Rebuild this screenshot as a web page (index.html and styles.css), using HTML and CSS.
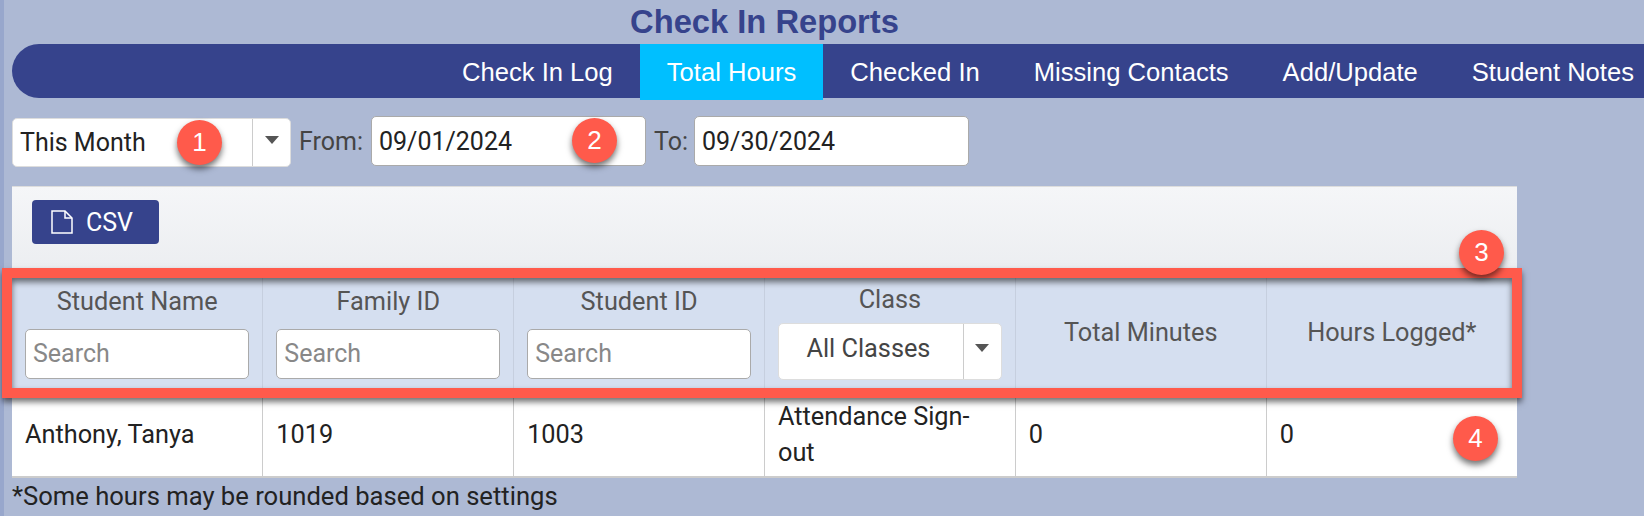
FILE: index.html
```html
<!DOCTYPE html>
<html lang="en">
<head>
    <meta charset="UTF-8">
    <title>Check In Reports</title>
    <link rel="stylesheet" href="styles.css">
</head>
<body>
    <div class="title-wrap">
        <h1>Check In Reports</h1>
    </div>

    <div class="nav">
        <a href="#">Check In Log</a>
        <a href="#" class="active">Total Hours</a>
        <a href="#">Checked In</a>
        <a href="#">Missing Contacts</a>
        <a href="#">Add/Update</a>
        <a href="#" class="last">Student Notes</a>
    </div>

    <div class="filters">
        <div class="select range-select">
            <span class="select-text">This Month</span>
            <span class="select-arrow"><i class="caret"></i></span>
        </div>
        <label for="from">From:</label>
        <input type="text" id="from" class="date" value="09/01/2024">
        <label for="to" class="to-label">To:</label>
        <input type="text" id="to" class="date" value="09/30/2024">
    </div>

    <div class="panel">
        <div class="toolbar">
            <button class="btn">
                <svg width="22" height="24" viewBox="0 0 22 24" fill="none" stroke="#fff" stroke-width="1.5">
                    <path d="M1 1H14L21 8V23H1Z"/>
                    <path d="M14 1V8H21"/>
                </svg>
                CSV
            </button>
        </div>
        <table>
            <thead>
                <tr>
                    <th class="head-filter">Student Name<input type="text" placeholder="Search"></th>
                    <th class="head-filter">Family ID<input type="text" placeholder="Search"></th>
                    <th class="head-filter">Student ID<input type="text" placeholder="Search"></th>
                    <th class="head-class">
                        Class
                        <div class="select class-select">
                            <span class="select-text">All Classes</span>
                            <span class="select-arrow"><i class="caret"></i></span>
                        </div>
                    </th>
                    <th>Total Minutes</th>
                    <th>Hours Logged*</th>
                </tr>
            </thead>
            <tbody>
                <tr>
                    <td>Anthony, Tanya</td>
                    <td>1019</td>
                    <td>1003</td>
                    <td>Attendance Sign-out</td>
                    <td>0</td>
                    <td>0</td>
                </tr>
            </tbody>
        </table>
    </div>

    <p class="note">*Some hours may be rounded based on settings</p>

    <!-- annotations on top of the screenshot -->
    <div class="red-box"></div>
    <span class="badge badge-1">1</span>
    <span class="badge badge-2">2</span>
    <span class="badge badge-3">3</span>
    <span class="badge badge-4">4</span>
</body>
</html>
```

FILE: styles.css
```css
html, body {
    height: 516px;
    overflow: hidden;
}
body {
    margin: 0;
    padding: 0 0 0 12px;
    background: #adb9d4;
    font-family: 'Roboto', sans-serif;
    color: #222;
    position: relative;
    box-sizing: border-box;
}
body::before {
    content: "";
    position: absolute;
    left: 0;
    top: 0;
    bottom: 0;
    width: 4px;
    background: #98a7cc;
}
.title-wrap {
    width: 1505px;
    height: 44px;
    text-align: center;
}
h1 {
    margin: 0;
    font-family: 'Liberation Sans', sans-serif;
    font-size: 32.7px;
    line-height: 44px;
    font-weight: bold;
    color: #36438c;
}
.nav {
    display: flex;
    justify-content: flex-end;
    height: 54px;
    background: #36438c;
    border-radius: 27px 0 0 27px;
    font-family: 'Liberation Sans', sans-serif;
    font-size: 25.6px;
}
.nav a {
    display: block;
    padding: 0 27px;
    line-height: 56px;
    color: white;
    text-decoration: none;
}
.nav a.active {
    height: 56px;
    background: #00bfff;
}
.nav a.last {
    padding-right: 10px;
}
.filters {
    display: flex;
    align-items: center;
    height: 52px;
    margin-top: 17px;
    font-size: 25px;
}
.filters label {
    margin: 0 8px;
    color: #444;
}
.filters .to-label {
    margin-right: 6px;
}
.date {
    width: 275px;
    height: 50px;
    box-sizing: border-box;
    padding: 0 7px;
    border: 1px solid #aaa;
    border-radius: 5px;
    background: white;
    font-family: 'Roboto', sans-serif;
    font-size: 25px;
    color: #222;
}
.select {
    display: flex;
    box-sizing: border-box;
    background: white;
    border: 1px solid #ddd;
    border-radius: 5px;
}
.select-text {
    flex: 1;
}
.select-arrow {
    width: 37px;
    border-left: 1px solid #ccc;
    text-align: center;
}
.caret {
    display: inline-block;
    width: 0;
    height: 0;
    border-left: 7px solid transparent;
    border-right: 7px solid transparent;
    border-top: 8px solid #555;
}
.range-select {
    width: 279px;
    height: 49px;
    margin-top: 3px;
    line-height: 47px;
}
.range-select .select-text {
    padding-left: 7px;
}
.range-select .caret {
    vertical-align: 7px;
}
.panel {
    width: 1505px;
    margin-top: 19px;
}
.toolbar {
    height: 82px;
    box-sizing: border-box;
    padding: 13px 20px;
    border-top: 1px solid #ddd;
    background: linear-gradient(to bottom, #f5f6f8, #eceef1);
}
.btn {
    display: flex;
    align-items: center;
    gap: 13px;
    width: 127px;
    height: 44px;
    padding: 0 0 0 19px;
    background: #36438c;
    color: white;
    border: none;
    border-radius: 4px;
    font-family: 'Roboto', sans-serif;
    font-size: 25px;
}
table {
    width: 100%;
    table-layout: fixed;
    border-collapse: collapse;
    background: white;
    border-bottom: 2px solid #ccc;
}
th {
    height: 130px;
    box-sizing: border-box;
    background: #d5dff0;
    border-left: 1px solid #c6cfdf;
    font-size: 25.3px;
    font-weight: normal;
    color: #555;
    padding: 0 13px 1px;
}
th:first-child, td:first-child {
    border-left: none;
}
th input {
    display: block;
    width: 100%;
    height: 50px;
    box-sizing: border-box;
    margin-top: 13px;
    padding: 0 7px;
    border: 1px solid #aaa;
    border-radius: 5px;
    font-family: 'Roboto', sans-serif;
    font-size: 25px;
}
th input::placeholder {
    color: #888;
}
.class-select {
    height: 57px;
    margin-top: 9px;
    line-height: 50px;
    color: #444;
}
.class-select .select-text {
    padding-right: 5px;
}
.class-select .caret {
    vertical-align: 5px;
}
td {
    height: 79px;
    box-sizing: border-box;
    padding: 0 13px 4px;
    border-left: 1px solid #ccc;
    font-size: 25.3px;
    line-height: 36px;
}
.note {
    margin: 3px 0 0;
    font-size: 25.6px;
    color: #222;
}
.red-box {
    position: absolute;
    left: 2px;
    top: 268px;
    width: 1520px;
    height: 130px;
    box-sizing: border-box;
    border: 10px solid #ff5a4b;
    box-shadow: 0 4px 6px rgba(0, 0, 0, 0.55), inset 0 4px 6px rgba(0, 0, 0, 0.55);
}
.badge {
    position: absolute;
    width: 45px;
    height: 45px;
    border-radius: 50%;
    background: #ff5a4b;
    color: white;
    font-family: 'Liberation Sans', sans-serif;
    font-size: 26px;
    line-height: 45px;
    text-align: center;
    box-shadow: 0 4px 6px rgba(0, 0, 0, 0.55);
}
.badge-1 { left: 177px; top: 120px; }
.badge-2 { left: 572px; top: 118px; }
.badge-3 { left: 1459px; top: 230px; }
.badge-4 { left: 1453px; top: 416px; }
```
